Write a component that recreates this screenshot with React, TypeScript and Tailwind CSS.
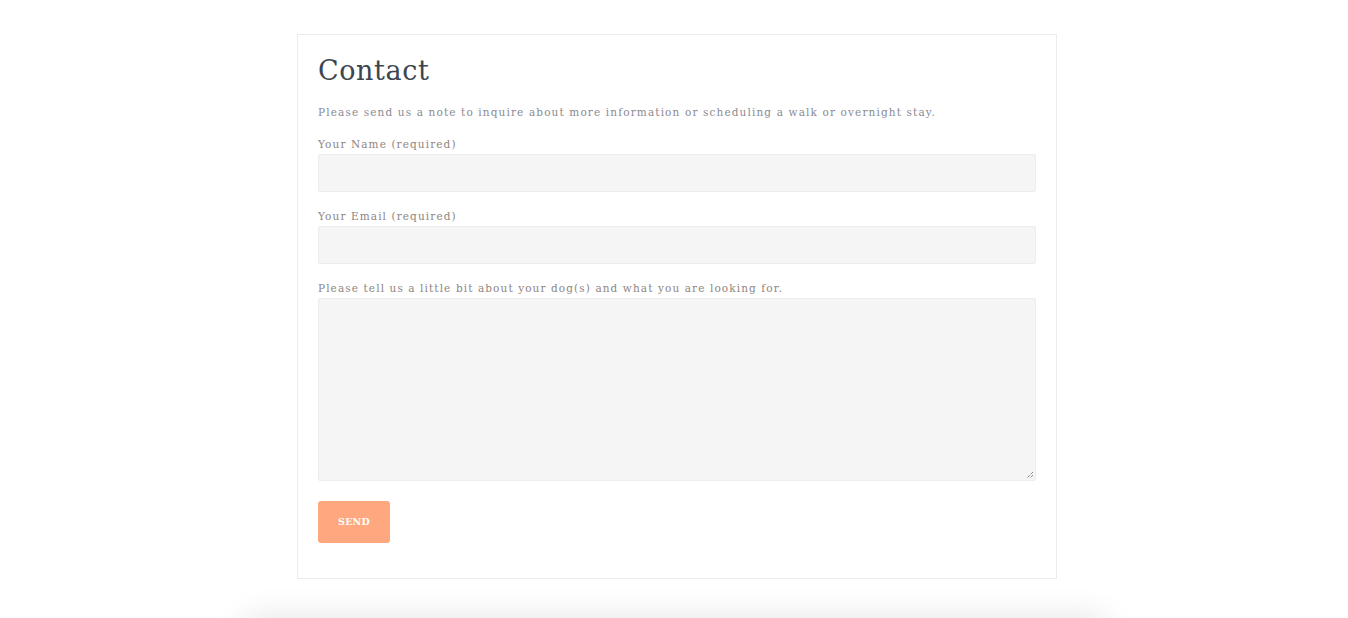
import React from "react";

const font = { fontFamily: '"DejaVu Serif", "Liberation Serif", serif' };

export default function App() {
  return (
    <div className="h-[618px] w-full overflow-hidden bg-white" style={font}>
      <div className="flex justify-center pl-[6px] pt-[34px]">
        <div className="relative w-[760px]">
          <div className="relative z-10 bg-white border border-[#ececec] px-[20px] pt-[18px] pb-[35px]">
            <h1 className="text-[27px] leading-[36px] text-[#3b4650] tracking-[0.6px]">Contact</h1>
            <p className="mt-[16px] text-[10.5px] leading-[14px] text-[#8b8a92] tracking-[1.13px]">
              Please send us a note to inquire about more information or scheduling a walk or overnight stay.
            </p>
            <div className="mt-[18px] flex flex-col">
              <label className="text-[10.5px] leading-[14px] text-[#8e8682] tracking-[1.1px]">Your Name (required)</label>
              <div className="mt-[3px] h-[38px] w-[718px] rounded-[2px] border border-[#ededed] bg-[#f5f5f5]" />
              <label className="mt-[17px] text-[10.5px] leading-[14px] text-[#8e8682] tracking-[1.1px]">Your Email (required)</label>
              <div className="mt-[3px] h-[38px] w-[718px] rounded-[2px] border border-[#ededed] bg-[#f5f5f5]" />
              <label className="mt-[17px] text-[10.5px] leading-[14px] text-[#8e8682] tracking-[1.1px]">Please tell us a little bit about your dog(s) and what you are looking for.</label>
              <div className="relative mt-[3px] h-[183px] w-[718px] rounded-[2px] border border-[#ededed] bg-[#f5f5f5]">
                <svg className="absolute right-[1px] bottom-[1px]" width="8" height="8" viewBox="0 0 8 8">
                  <path d="M7 1 L1 7 M7 4 L4 7" stroke="#555" strokeWidth="1" strokeDasharray="1 1" />
                </svg>
              </div>
              <button className="mt-[20px] h-[42px] w-[72px] rounded-[3px] bg-[#ffa77e] text-white text-[9.5px] font-bold tracking-[0.2px]">
                SEND
              </button>
            </div>
          </div>
          <div className="mt-[40px] -ml-[52px] h-[40px] w-[860px] bg-white shadow-[0_0_34px_rgba(0,0,0,0.12)]" />
        </div>
      </div>
    </div>
  );
}
